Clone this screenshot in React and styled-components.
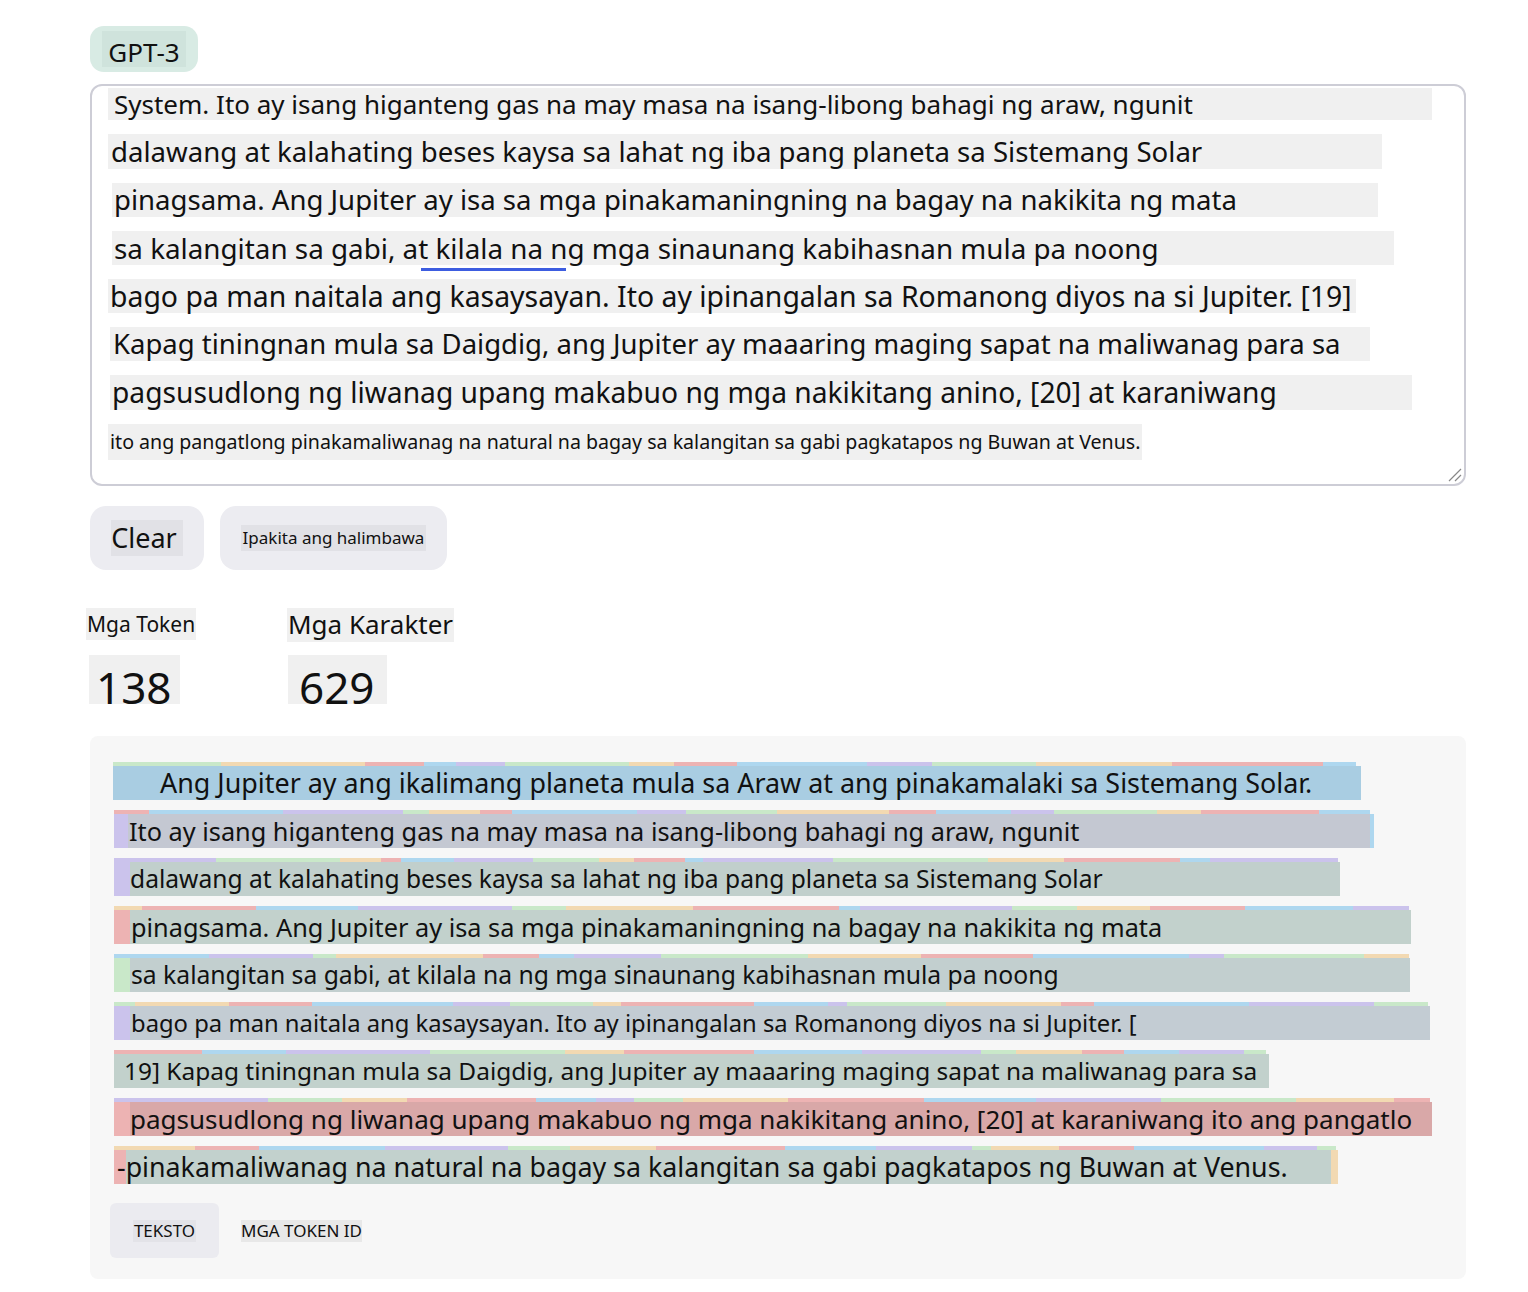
import React from "react";
import styled, { createGlobalStyle } from "styled-components";

const Global = createGlobalStyle`
  html, body { margin: 0; padding: 0; background: #ffffff; }
  body { font-family: "Noto Sans", "Open Sans", sans-serif; color: #111; }
`;

const Page = styled.div`
  width: 1376px;
  margin-left: 90px;
  padding-top: 26px;
  padding-bottom: 14px;
  display: flex;
  flex-direction: column;
`;

const ModelTab = styled.div`
  align-self: flex-start;
  height: 46px;
  width: 108px;
  border-radius: 14px;
  background: #d8ebe4;
  display: flex;
  align-items: center;
  justify-content: center;
`;

const Hl = styled.span`
  background: ${(p) => p.$bg || "#f0f0f0"};
  font-size: ${(p) => p.$fs}px;
  line-height: ${(p) => p.$lh || 1.3};
  padding: ${(p) => p.$pad || "0"};
  display: inline-block;
  white-space: nowrap;
`;

const Editor = styled.div`
  position: relative;
  margin-top: 12px;
  height: 396px;
  border: 2px solid #cdcdd6;
  border-radius: 12px;
  display: flex;
  flex-direction: column;
  gap: 14px;
  padding-top: 2px;
`;

const EditorLine = styled.div`
  margin-left: ${(p) => p.$x}px;
  width: ${(p) => p.$w}px;
  height: ${(p) => p.$h}px;
  padding-left: ${(p) => p.$pl}px;
  background: #f0f0f0;
  font-size: ${(p) => p.$fs}px;
  line-height: ${(p) => p.$h}px;
  white-space: nowrap;
  box-sizing: border-box;
`;

const Marked = styled.span`
  position: relative;
  &::after {
    content: "";
    position: absolute;
    left: 18px;
    right: -16px;
    bottom: -4px;
    height: 3px;
    background: #3d5de0;
  }
`;

const Grip = styled.svg`
  position: absolute;
  right: 2px;
  bottom: 2px;
`;

const ButtonRow = styled.div`
  display: flex;
  gap: 16px;
  margin-top: 20px;
`;

const Btn = styled.div`
  height: 64px;
  width: ${(p) => p.$w}px;
  border-radius: 16px;
  background: #ececf1;
  display: flex;
  align-items: center;
  justify-content: center;
`;

const Stats = styled.div`
  display: flex;
  margin-top: 38px;
  margin-left: -4px;
`;

const Stat = styled.div`
  width: ${(p) => p.$w}px;
  display: flex;
  flex-direction: column;
  gap: ${(p) => p.$gap}px;
  align-items: flex-start;
`;

const Num = styled.span`
  background: #f0f0f0;
  font-size: 44px;
  line-height: 34px;
  padding: 15px ${(p) => p.$pr}px 0 ${(p) => p.$pl}px;
  margin-left: ${(p) => p.$ml}px;
  display: inline-block;
`;

const Panel = styled.div`
  margin-top: 32px;
  background: #f7f7f7;
  border-radius: 8px;
  padding: 26px 0 21px 23px;
  display: flex;
  flex-direction: column;
  gap: 10px;
`;

const TokLine = styled.div`
  display: flex;
  flex-direction: column;
  align-items: flex-start;
  margin-left: ${(p) => p.$x}px;
`;

const Strip = styled.div`
  display: flex;
  height: 4px;
`;

const Seg = styled.div`
  height: 4px;
  background: ${(p) => p.$c};
`;

const Bar = styled.div`
  display: flex;
  height: 34px;
`;

const Tag = styled.div`
  width: ${(p) => p.$w}px;
  flex: none;
  background: ${(p) => p.$c};
`;

const Main = styled.div`
  background: ${(p) => p.$c};
  width: ${(p) => p.$w}px;
  padding-left: ${(p) => p.$pl}px;
  text-indent: ${(p) => p.$ti || 0}px;
  font-size: ${(p) => p.$fs}px;
  line-height: 34px;
  white-space: nowrap;
  box-sizing: border-box;
`;

const Tabs = styled.div`
  display: flex;
  align-items: center;
  gap: 22px;
  margin-top: 9px;
  margin-left: -3px;
`;

const TabBtn = styled.div`
  height: 55px;
  width: ${(p) => (p.$active ? "109px" : "auto")};
  border-radius: 6px;
  background: ${(p) => (p.$active ? "#ebebf0" : "transparent")};
  display: flex;
  align-items: center;
  justify-content: center;
  text-transform: uppercase;
`;

const C = {
  purple: "#cbc3ec",
  green: "#c9e8c9",
  orange: "#f2d9b2",
  red: "#edb3b3",
  blue: "#aed7ef",
};
const cycle = [C.purple, C.green, C.orange, C.red, C.blue];

function segments(total, seed) {
  const out = [];
  let s = seed;
  let sum = 0;
  let i = seed % 5;
  while (sum < total) {
    s = (s * 9301 + 49297) % 233280;
    let w = 18 + Math.floor((s / 233280) * 140);
    if (sum + w > total) w = total - sum;
    out.push({ w, c: cycle[i % 5] });
    sum += w;
    i++;
  }
  return out;
}

const editorLines = [
  { x: 16, w: 1324, pl: 6, h: 32, fs: 26, t: "System. Ito ay isang higanteng gas na may masa na isang-libong bahagi ng araw, ngunit" },
  { x: 16, w: 1274, pl: 3, h: 35, fs: 27.6, t: "dalawang at kalahating beses kaysa sa lahat ng iba pang planeta sa Sistemang Solar" },
  { x: 20, w: 1266, pl: 2, h: 34, fs: 27.55, t: "pinagsama. Ang Jupiter ay isa sa mga pinakamaningning na bagay na nakikita ng mata" },
  { x: 20, w: 1282, pl: 2, h: 34, fs: 27.8, mark: true },
  { x: 16, w: 1248, pl: 2, h: 34, fs: 28.4, t: "bago pa man naitala ang kasaysayan. Ito ay ipinangalan sa Romanong diyos na si Jupiter. [19]" },
  { x: 18, w: 1260, pl: 3, h: 34, fs: 27.5, t: "Kapag tiningnan mula sa Daigdig, ang Jupiter ay maaaring maging sapat na maliwanag para sa" },
  { x: 18, w: 1302, pl: 2, h: 35, fs: 28.2, t: "pagsusudlong ng liwanag upang makabuo ng mga nakikitang anino, [20] at karaniwang" },
  { x: 16, w: 1034, pl: 2, h: 36, fs: 19.6, t: "ito ang pangatlong pinakamaliwanag na natural na bagay sa kalangitan sa gabi pagkatapos ng Buwan at Venus." },
];

const tokLines = [
  { x: 0, tag: null, main: "#a9cde2", w: 1248, pl: 47, fs: 26.9, t: "Ang Jupiter ay ang ikalimang planeta mula sa Araw at ang pinakamalaki sa Sistemang Solar.", strip: 1243 },
  { x: 1, tag: { c: C.purple, w: 14 }, main: "#c4c8d2", w: 1256, pl: 1, fs: 25.3, right: { c: C.blue, w: 4 }, t: "Ito ay isang higanteng gas na may masa na isang-libong bahagi ng araw, ngunit", strip: 1256 },
  { x: 1, tag: { c: C.purple, w: 16 }, main: "#c1cfcc", w: 1226, pl: 0, fs: 24.6, t: "dalawang at kalahating beses kaysa sa lahat ng iba pang planeta sa Sistemang Solar", strip: 1224 },
  { x: 1, tag: { c: C.red, w: 16 }, main: "#c2d1cc", w: 1297, pl: 1, fs: 25.3, t: "pinagsama. Ang Jupiter ay isa sa mga pinakamaningning na bagay na nakikita ng mata", strip: 1295 },
  { x: 1, tag: { c: C.green, w: 16 }, main: "#c2cfcf", w: 1296, pl: 1, fs: 24.7, t: "sa kalangitan sa gabi, at kilala na ng mga sinaunang kabihasnan mula pa noong", strip: 1295 },
  { x: 1, tag: { c: C.purple, w: 16 }, main: "#c3ccd3", w: 1316, pl: 1, fs: 23.8, t: "bago pa man naitala ang kasaysayan. Ito ay ipinangalan sa Romanong diyos na si Jupiter. [", strip: 1314 },
  { x: 1, tag: null, main: "#c2d1cc", w: 1155, pl: 10, fs: 24.45, t: "19] Kapag tiningnan mula sa Daigdig, ang Jupiter ay maaaring maging sapat na maliwanag para sa", strip: 1152 },
  { x: 1, tag: { c: C.red, w: 16 }, main: "#d9a8a8", w: 1318, pl: 0, fs: 26, t: "pagsusudlong ng liwanag upang makabuo ng mga nakikitang anino, [20] at karaniwang ito ang pangatlo", strip: 1316 },
  { x: 1, tag: { c: C.red, w: 12 }, main: "#c2d1cd", w: 1217, pl: 0, ti: -9, fs: 26.8, right: { c: C.orange, w: 7 }, t: "-pinakamaliwanag na natural na bagay sa kalangitan sa gabi pagkatapos ng Buwan at Venus.", strip: 1222 },
];

export default function App() {
  return (
    <>
      <Global />
      <Page>
        <ModelTab>
          <Hl $fs={26} $bg="#cfe3dc" $pad="7px 6px 0" $lh={1.15}>GPT-3</Hl>
        </ModelTab>

        <Editor>
          {editorLines.map((l, i) => (
            <EditorLine key={i} $x={l.x} $w={l.w} $pl={l.pl} $h={l.h} $fs={l.fs}>
              {l.mark ? (
                <>
                  sa kalangitan sa gabi, <Marked>at kilala na </Marked>ng mga sinaunang kabihasnan mula pa noong
                </>
              ) : (
                l.t
              )}
            </EditorLine>
          ))}
          <Grip width="16" height="16" viewBox="0 0 16 16">
            <path d="M15 3 L3 15 M15 9 L9 15" stroke="#888" strokeWidth="1.2" fill="none" />
          </Grip>
        </Editor>

        <ButtonRow>
          <Btn $w={114}>
            <Hl $fs={27} $bg="#e1e1e6" $pad="0 6px 0 0">Clear</Hl>
          </Btn>
          <Btn $w={227}>
            <Hl $fs={17} $bg="#e1e1e6" $pad="2px 2px">Ipakita ang halimbawa</Hl>
          </Btn>
        </ButtonRow>

        <Stats>
          <Stat $w={201} $gap={15}>
            <Hl $fs={21} $lh={1.35} $pad="2px 1px">Mga Token</Hl>
            <Num $ml={3} $pl={7} $pr={8}>138</Num>
          </Stat>
          <Stat $w={200} $gap={13}>
            <Hl $fs={26} $pad="0 1px">Mga Karakter</Hl>
            <Num $ml={1} $pl={11} $pr={12}>629</Num>
          </Stat>
        </Stats>

        <Panel>
          {tokLines.map((l, i) => (
            <TokLine key={i} $x={l.x}>
              <Strip>
                {segments(l.strip, i * 37 + 11).map((s, j) => (
                  <Seg key={j} $c={s.c} style={{ width: s.w }} />
                ))}
              </Strip>
              <Bar>
                {l.tag && <Tag $c={l.tag.c} $w={l.tag.w} />}
                <Main $c={l.main} $w={l.w - (l.tag ? l.tag.w : 0)} $pl={l.pl} $ti={l.ti} $fs={l.fs}>
                  {l.t}
                </Main>
                {l.right && <Tag $c={l.right.c} $w={l.right.w} />}
              </Bar>
            </TokLine>
          ))}
          <Tabs>
            <TabBtn $active>
              <Hl $fs={17} $bg="#e3e3e8" $pad="0 1px">Teksto</Hl>
            </TabBtn>
            <TabBtn>
              <Hl $fs={17} $bg="#e8e8e8">Mga Token ID</Hl>
            </TabBtn>
          </Tabs>
        </Panel>
      </Page>
    </>
  );
}
